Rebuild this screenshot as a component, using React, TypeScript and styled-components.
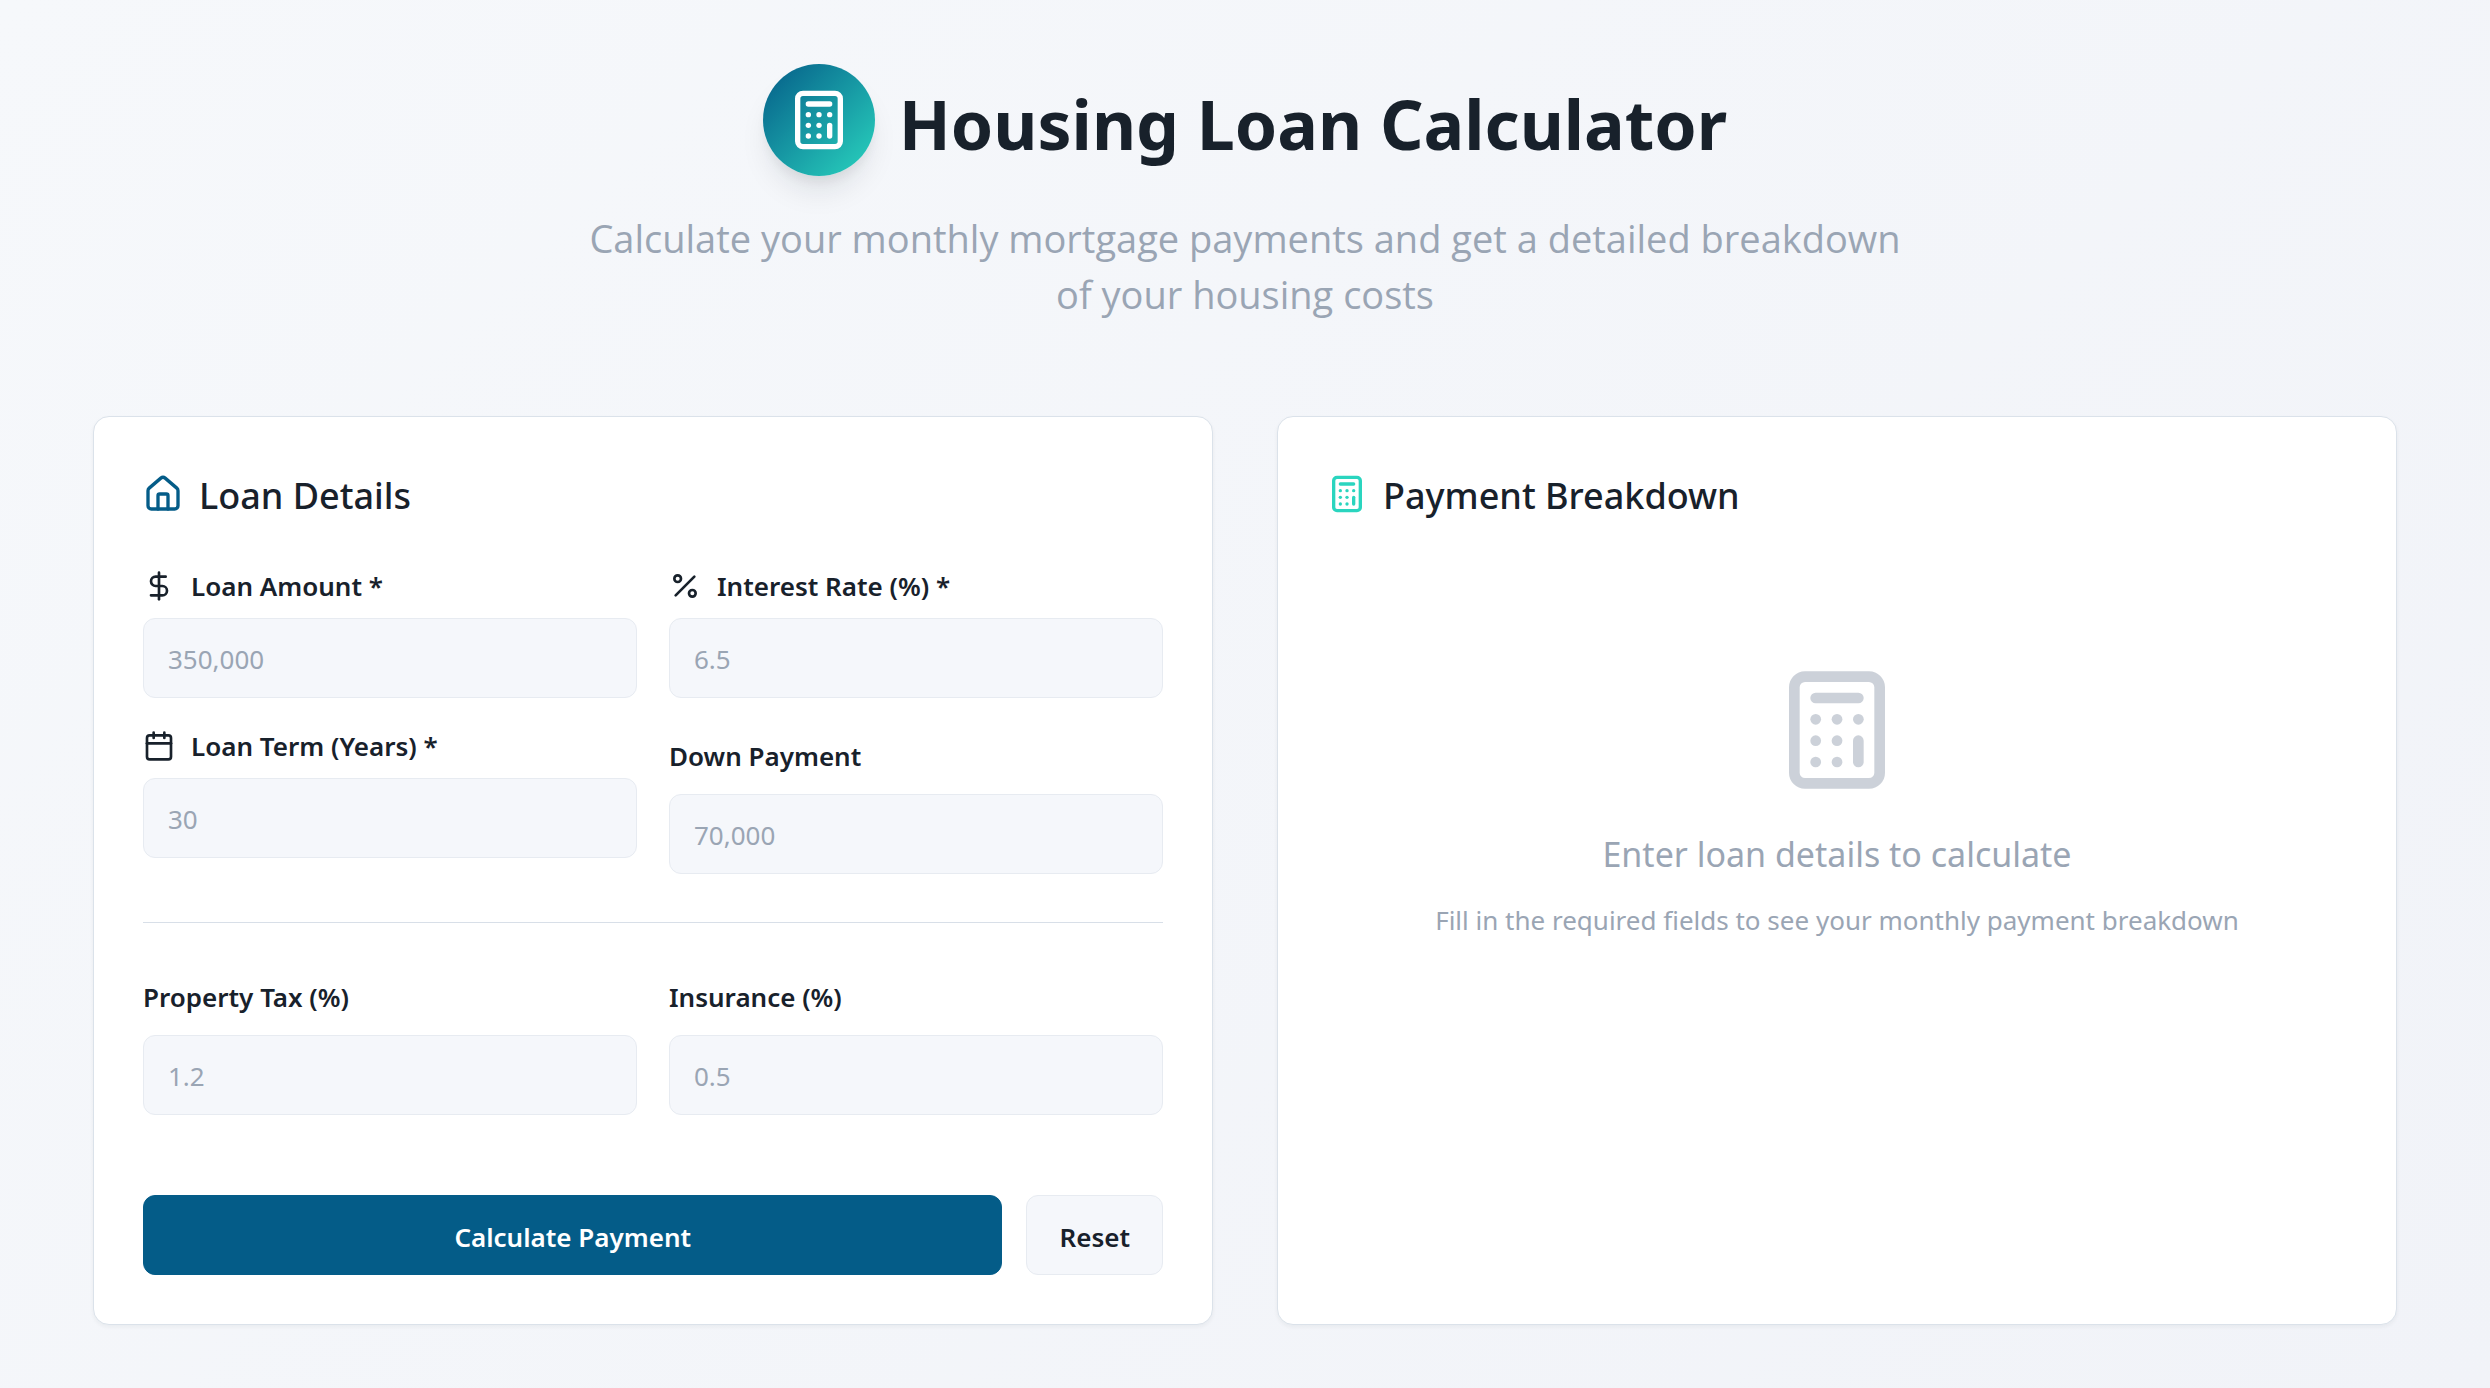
import React, { useState } from "react";
import styled, { createGlobalStyle } from "styled-components";
import { Calculator, Calendar, DollarSign, House, Percent } from "lucide-react";

const GlobalStyle = createGlobalStyle`
  *, *::before, *::after { box-sizing: border-box; }
  body {
    margin: 0;
    color: #18212b;
    background: #f5f7fb;
    font-family: "Noto Sans", "Open Sans", sans-serif;
    font-size: 32px;
    line-height: 48px;
  }
`;

const Page = styled.main`
  min-height: 100vh;
  padding: 64px;
  background: linear-gradient(135deg, #f6f8fb 0%, #f1f3f8 100%);
`;

const Container = styled.div`
  max-width: 2304px;
  margin: 0 auto;
`;

const Header = styled.header`
  display: flex;
  flex-direction: column;
  align-items: center;
  gap: 34px;
  margin-bottom: 94px;
`;

const Brand = styled.div`
  display: flex;
  align-items: center;
  gap: 24px;
`;

const Badge = styled.span`
  display: flex;
  padding: 24px;
  color: #fff;
  border-radius: 50%;
  background: linear-gradient(135deg, #045c88 0%, #2ad5bf 100%);
  box-shadow: 0 20px 30px -6px rgba(24, 33, 43, 0.1), 0 8px 12px -4px rgba(24, 33, 43, 0.08);
`;

const Title = styled.h1`
  margin: 0;
  padding-top: 8px;
  font-size: 68px;
  line-height: 80px;
  font-weight: 700;
`;

const Subtitle = styled.p`
  max-width: 1344px;
  margin: 0;
  color: #9aa5b4;
  font-family: "Open Sans", "Noto Sans", sans-serif;
  font-size: 38px;
  line-height: 56px;
  text-align: center;
`;

const Columns = styled.div`
  display: grid;
  grid-template-columns: repeat(2, minmax(0, 1fr));
  gap: 64px;
`;

const Card = styled.section`
  padding: 49px;
  border: 1px solid #dbe2ea;
  border-radius: 16px;
  background: #fff;
  box-shadow: 0 2px 4px rgba(24, 33, 43, 0.05);
`;

const CardTitle = styled.h2<{ $icon: string }>`
  display: flex;
  align-items: center;
  gap: 16px;
  margin: 0 0 48px;
  font-size: 36px;
  line-height: 52px;
  font-weight: 500;
  svg { color: ${(p) => p.$icon}; }
  span { padding-top: 4px; }
`;

const Form = styled.form`
  display: flex;
  flex-direction: column;
  gap: 48px;
`;

const Fields = styled.div`
  display: grid;
  grid-template-columns: repeat(2, minmax(0, 1fr));
  gap: 32px;
`;

const Field = styled.div`
  display: flex;
  flex-direction: column;
  gap: 16px;
`;

const Label = styled.label<{ $compact?: boolean }>`
  display: flex;
  align-items: center;
  gap: 16px;
  padding-top: ${(p) => (p.$compact ? "0" : "4px")};
  font-size: 26px;
  line-height: ${(p) => (p.$compact ? "32px" : "44px")};
  font-weight: 600;
`;

const Input = styled.input`
  width: 100%;
  height: 80px;
  padding: 2px 24px 0;
  border: 1px solid #e7ebf1;
  border-radius: 12px;
  outline: none;
  color: inherit;
  background: #f5f7fb;
  font: inherit;
  font-size: 26px;
  &::placeholder { color: #9aa5b4; opacity: 1; }
`;

const Divider = styled.hr`
  width: 100%;
  height: 1px;
  margin: 0;
  border: 0;
  background: #d8dfe8;
`;

const Actions = styled.div`
  display: flex;
  gap: 24px;
  padding-top: 32px;
`;

const Button = styled.button<{ $primary?: boolean }>`
  flex: ${(p) => (p.$primary ? "1" : "none")};
  height: 80px;
  padding: 4px 32px 0;
  border: 1px solid ${(p) => (p.$primary ? "#045c88" : "#e7ebf1")};
  border-radius: 12px;
  color: ${(p) => (p.$primary ? "#fff" : "#18212b")};
  background: ${(p) => (p.$primary ? "#045c88" : "#f5f7fb")};
  font: inherit;
  font-size: 26px;
  font-weight: 600;
  cursor: pointer;
`;

const Empty = styled.div`
  display: flex;
  flex-direction: column;
  align-items: center;
  padding-top: 96px;
  color: #9aa5b4;
  text-align: center;
  svg { margin-bottom: 32px; opacity: 0.5; }
`;

const EmptyTitle = styled.p`
  margin: 0 0 18px;
  font-size: 34px;
  line-height: 56px;
`;

const EmptyText = styled.p`
  margin: 0;
  font-size: 26px;
  line-height: 40px;
`;

type FieldSpec = { id: string; label: string; placeholder: string; icon?: React.ReactNode };

const loanFields: FieldSpec[] = [
  { id: "amount", label: "Loan Amount *", placeholder: "350,000", icon: <DollarSign size={32} /> },
  { id: "rate", label: "Interest Rate (%) *", placeholder: "6.5", icon: <Percent size={32} /> },
  { id: "term", label: "Loan Term (Years) *", placeholder: "30", icon: <Calendar size={32} /> },
  { id: "down", label: "Down Payment", placeholder: "70,000" },
];

const costFields: FieldSpec[] = [
  { id: "tax", label: "Property Tax (%)", placeholder: "1.2" },
  { id: "insurance", label: "Insurance (%)", placeholder: "0.5" },
];

export default function App() {
  const [values, setValues] = useState<Record<string, string>>({});

  const renderField = ({ id, label, placeholder, icon }: FieldSpec) => (
    <Field key={id}>
      <Label htmlFor={id} $compact={Boolean(icon)}>
        {icon}
        {label}
      </Label>
      <Input
        id={id}
        inputMode="decimal"
        placeholder={placeholder}
        value={values[id] ?? ""}
        onChange={(e) => setValues({ ...values, [id]: e.target.value })}
      />
    </Field>
  );

  return (
    <>
      <GlobalStyle />
      <Page>
        <Container>
          <Header>
            <Brand>
              <Badge>
                <Calculator size={64} />
              </Badge>
              <Title>Housing Loan Calculator</Title>
            </Brand>
            <Subtitle>
              Calculate your monthly mortgage payments and get a detailed breakdown of your housing costs
            </Subtitle>
          </Header>
          <Columns>
            <Card>
              <CardTitle $icon="#045c88">
                <House size={40} />
                <span>Loan Details</span>
              </CardTitle>
              <Form onSubmit={(e) => e.preventDefault()}>
                <Fields>{loanFields.map(renderField)}</Fields>
                <Divider />
                <Fields>{costFields.map(renderField)}</Fields>
                <Actions>
                  <Button type="submit" $primary>
                    Calculate Payment
                  </Button>
                  <Button type="button" onClick={() => setValues({})}>
                    Reset
                  </Button>
                </Actions>
              </Form>
            </Card>
            <Card>
              <CardTitle $icon="#2ad5bf">
                <Calculator size={40} />
                <span>Payment Breakdown</span>
              </CardTitle>
              <Empty>
                <Calculator size={128} />
                <EmptyTitle>Enter loan details to calculate</EmptyTitle>
                <EmptyText>Fill in the required fields to see your monthly payment breakdown</EmptyText>
              </Empty>
            </Card>
          </Columns>
        </Container>
      </Page>
    </>
  );
}
